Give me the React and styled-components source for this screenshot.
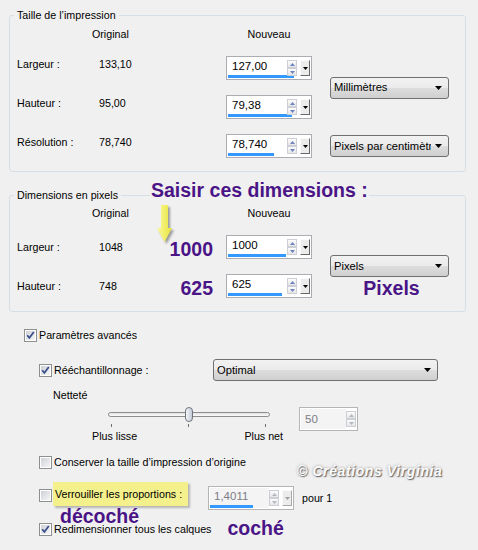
import styled, { createGlobalStyle } from "styled-components";

const GlobalStyle = createGlobalStyle`
  html, body {
    margin: 0;
    padding: 0;
    background: #f0f0f0;
  }
  body {
    font-family: "Liberation Sans", Arial, sans-serif;
    font-size: 10.7px;
    color: #000;
  }
`;

const ink = "#4a1487";

export default function App() {
    return (
        <Page>
            <GlobalStyle />

            <Group $top={0} $pt={6}>
                <Legend>Taille de l’impression</Legend>
                <Grid $rows="24px 24px 24px">
                    <ColHead $col={2} $shift={-6}>Original</ColHead>
                    <ColHead $col={4} $center>Nouveau</ColHead>

                    <RowLabel $row={2} $top>Largeur :</RowLabel>
                    <OrigValue $row={2} $top>133,10</OrigValue>
                    <SpinCell $row={2}><Spinner value="127,00" bar={66} /></SpinCell>

                    <RowLabel $row={3} $top>Hauteur :</RowLabel>
                    <OrigValue $row={3} $top>95,00</OrigValue>
                    <SpinCell $row={3}><Spinner value="79,38" bar={64} /></SpinCell>

                    <RowLabel $row={4} $top>Résolution :</RowLabel>
                    <OrigValue $row={4} $top>78,740</OrigValue>
                    <SpinCell $row={4}><Spinner value="78,740" bar={46} /></SpinCell>

                    <UnitCell $rows="2 / 4"><Dropdown width={119}>Millimètres</Dropdown></UnitCell>
                    <UnitCell $rows="4 / 5"><Dropdown width={119}>Pixels par centimètre</Dropdown></UnitCell>
                </Grid>
            </Group>

            <Group $top={16} $pt={5}>
                <Legend>Dimensions en pixels</Legend>
                <Grid $rows="24px 24px">
                    <ColHead $col={2} $shift={-6}>Original</ColHead>
                    <ColHead $col={4} $center>Nouveau</ColHead>

                    <RowLabel $row={2}>Largeur :</RowLabel>
                    <OrigValue $row={2}>1048</OrigValue>
                    <BigNumber $row={2}>1000</BigNumber>
                    <SpinCell $row={2}><Spinner value="1000" bar={58} /></SpinCell>

                    <RowLabel $row={3}>Hauteur :</RowLabel>
                    <OrigValue $row={3}>748</OrigValue>
                    <BigNumber $row={3}>625</BigNumber>
                    <SpinCell $row={3}><Spinner value="625" bar={54} /></SpinCell>

                    <UnitStack>
                        <Dropdown width={119}>Pixels</Dropdown>
                        <UnitNote>Pixels</UnitNote>
                    </UnitStack>
                </Grid>
            </Group>

            <Advanced>
                <CheckRow $indent={24} $top={17}>
                    <Checkbox checked />
                    <span>Paramètres avancés</span>
                </CheckRow>

                <ResampleRow>
                    <CheckGroup>
                        <Checkbox checked />
                        <span>Rééchantillonnage :</span>
                    </CheckGroup>
                    <Dropdown width={225}>Optimal</Dropdown>
                </ResampleRow>

                <SubLabel>Netteté</SubLabel>

                <SliderRow>
                    <Slider>
                        <TrackRow>
                            <Track />
                            <Thumb style={{ left: 77 }} />
                        </TrackRow>
                        <Ticks>
                            <Tick />
                            <Tick />
                            <Tick />
                        </Ticks>
                        <Scale>
                            <span>Plus lisse</span>
                            <span>Plus net</span>
                        </Scale>
                    </Slider>
                    <Spinner value="50" width={59} disabled noDrop />
                </SliderRow>

                <CheckRow $indent={39} $top={13}>
                    <Checkbox />
                    <span>Conserver la taille d’impression d’origine</span>
                </CheckRow>

                <LockRow>
                    <LockBox><Checkbox /></LockBox>
                    <Tip>Verrouiller les proportions :</Tip>
                    <LockSpin><Spinner value="1,4011" bar={43} disabled /></LockSpin>
                    <Per>pour 1</Per>
                </LockRow>

                <Note $indent={60}>décoché</Note>

                <CheckRow $indent={39} $top={-2}>
                    <Checkbox checked />
                    <span>Redimensionner tous les calques</span>
                    <Note $indent={14}>coché</Note>
                </CheckRow>
            </Advanced>

            <Headline>Saisir ces dimensions :</Headline>
            <ArrowMark width="22" height="44" viewBox="0 0 22 44">
                <defs>
                    <filter id="blur" x="-50%" y="-50%" width="200%" height="200%">
                        <feGaussianBlur stdDeviation="1.2" />
                    </filter>
                    <linearGradient id="yel" x1="0" x2="1">
                        <stop offset="0" stopColor="#fbfa9c" />
                        <stop offset="1" stopColor="#e8e23a" />
                    </linearGradient>
                </defs>
                <path d="M8 4 H15 V27 H19 L11.5 41 L4 27 H8 Z" fill="#555" opacity="0.55" filter="url(#blur)" />
                <path d="M6 2 H13 V25 H17 L9.5 39 L2 25 H6 Z" fill="url(#yel)" />
            </ArrowMark>
            <Watermark>© Créations Virginia</Watermark>
        </Page>
    );
}

function Spinner({ value, bar, disabled, noDrop, width = 86 }) {
    return (
        <SpinBox $w={width} $disabled={disabled}>
            <Field $disabled={disabled} $center={!bar}>
                <FieldText $disabled={disabled}>{value}</FieldText>
                {bar ? <Bar style={{ width: bar }} /> : null}
            </Field>
            <Steppers>
                <Step>
                    <svg width="5" height="3" viewBox="0 0 5 3"><polygon points="0,3 5,3 2.5,0" fill={disabled ? "#b4b8c0" : "#6d84bf"} /></svg>
                </Step>
                <Step>
                    <svg width="5" height="3" viewBox="0 0 5 3"><polygon points="0,0 5,0 2.5,3" fill={disabled ? "#b4b8c0" : "#6d84bf"} /></svg>
                </Step>
            </Steppers>
            {!noDrop && (
                <DropBtn $disabled={disabled}>
                    <svg width="5" height="3" viewBox="0 0 5 3"><polygon points="0,0 5,0 2.5,3" fill={disabled ? "#a0a0a0" : "#000"} /></svg>
                </DropBtn>
            )}
        </SpinBox>
    );
}

function Dropdown({ children, width }) {
    return (
        <SelectBox $w={width}>
            <SelectText>{children}</SelectText>
            <svg width="7" height="4" viewBox="0 0 7 4"><polygon points="0,0 7,0 3.5,4" fill="#000" /></svg>
        </SelectBox>
    );
}

function Checkbox({ checked }) {
    return (
        <CheckOuter>
            <CheckInner>
                {checked && (
                    <svg width="9" height="9" viewBox="0 0 9 9">
                        <path d="M1.2 4.2 L3.4 6.8 L7.8 1" stroke="#3a4f8c" strokeWidth="1.7" fill="none" />
                    </svg>
                )}
            </CheckInner>
        </CheckOuter>
    );
}

const Page = styled.div`
    position: relative;
    width: 478px;
    height: 550px;
    padding-top: 8px;
    box-sizing: border-box;
    overflow: hidden;
`;

const Group = styled.fieldset`
    margin: ${({ $top }) => $top}px 12px 0 9px;
    padding: ${({ $pt }) => $pt}px 4px 13px;
    border: 1px solid #d5dfe5;
    border-radius: 3px;
    min-width: 0;
`;

const Legend = styled.legend`
    padding: 0 3px;
    line-height: 14px;
`;

const Grid = styled.div`
    display: grid;
    grid-template-columns: 81px 63px 65px 86px 18px 119px;
    grid-template-rows: 13px ${({ $rows }) => $rows};
    row-gap: 15px;
    padding-left: 3px;
    line-height: 13px;
`;

const ColHead = styled.div`
    grid-row: 1;
    grid-column: ${({ $col }) => $col};
    justify-self: ${({ $center }) => ($center ? "center" : "start")};
    margin-left: ${({ $shift }) => $shift || 0}px;
`;

const RowLabel = styled.div`
    grid-column: 1;
    grid-row: ${({ $row }) => $row};
    align-self: ${({ $top }) => ($top ? "start" : "center")};
    padding-top: ${({ $top }) => ($top ? 2 : 0)}px;
`;

const OrigValue = styled(RowLabel)`
    grid-column: 2;
    padding-left: 1px;
`;

const BigNumber = styled.div`
    grid-column: 3;
    grid-row: ${({ $row }) => $row};
    justify-self: end;
    align-self: end;
    padding-right: 13px;
    font-size: 19.5px;
    font-weight: bold;
    line-height: 20px;
    color: ${ink};
`;

const SpinCell = styled.div`
    grid-column: 4;
    grid-row: ${({ $row }) => $row};
`;

const UnitCell = styled.div`
    grid-column: 6;
    grid-row: ${({ $rows }) => $rows};
    align-self: center;
`;

const UnitStack = styled.div`
    grid-column: 6;
    grid-row: 2 / 4;
    display: flex;
    flex-direction: column;
    justify-content: flex-end;
    align-items: center;
    gap: 1px;
`;

const UnitNote = styled.div`
    font-size: 19.5px;
    font-weight: bold;
    line-height: 20px;
    color: ${ink};
    margin-left: 4px;
`;

const SpinBox = styled.div`
    display: flex;
    align-items: center;
    width: ${({ $w }) => $w}px;
    height: 24px;
    box-sizing: border-box;
    padding: 1px;
    border: 1px solid ${({ $disabled }) => ($disabled ? "#b5b5b5" : "#abadb3")};
    background: #fff;
`;

const Field = styled.div`
    flex: 1;
    min-width: 0;
    align-self: stretch;
    display: flex;
    flex-direction: column;
    justify-content: ${({ $center }) => ($center ? "center" : "flex-start")};
    background: ${({ $disabled }) => ($disabled ? "#f4f4f4" : "#fff")};
`;

const FieldText = styled.div`
    padding-left: 4px;
    line-height: 16px;
    font-size: 11.5px;
    white-space: nowrap;
    color: ${({ $disabled }) => ($disabled ? "#7c7c86" : "#000")};
`;

const Bar = styled.div`
    flex: none;
    height: 3px;
    margin-top: 1px;
    background: #3399ff;
`;

const Steppers = styled.div`
    flex: none;
    display: flex;
    flex-direction: column;
    width: 10px;
    position: relative;
`;

const Step = styled.div`
    width: 10px;
    height: 8px;
    box-sizing: border-box;
    border: 1px solid #ccd0d6;
    background: linear-gradient(#fcfcfc, #e6e6e6);
    display: flex;
    align-items: center;
    justify-content: center;
`;

const DropBtn = styled.div`
    flex: none;
    width: 10px;
    height: 16px;
    margin-left: 3px;
    box-sizing: border-box;
    border: 1px solid;
    border-color: #fafafa ${({ $disabled }) => ($disabled ? "#a8a8a8 #a8a8a8" : "#696969 #696969")} #fafafa;
    background: #ececec;
    display: flex;
    align-items: center;
    justify-content: center;
`;

const SelectBox = styled.div`
    display: flex;
    align-items: center;
    width: ${({ $w }) => $w}px;
    height: 22px;
    box-sizing: border-box;
    padding: 0 6px 0 3px;
    border: 1px solid #707070;
    border-radius: 3px;
    background: linear-gradient(#f2f2f2 0%, #ebebeb 48%, #dddddd 52%, #cfcfcf 100%);
    font-size: 11.2px;
`;

const SelectText = styled.span`
    flex: 1;
    min-width: 0;
    margin-right: 4px;
    overflow: hidden;
    white-space: nowrap;
`;

const CheckOuter = styled.span`
    flex: none;
    display: flex;
    width: 13px;
    height: 13px;
    box-sizing: border-box;
    padding: 1px;
    border: 1px solid #8e8f8f;
    background: #fff;
`;

const CheckInner = styled.span`
    flex: 1;
    display: flex;
    background: linear-gradient(135deg, #cdd0d6, #f6f6f6);
    svg {
        overflow: visible;
    }
`;

const Advanced = styled.div`
    display: flex;
    flex-direction: column;
    line-height: 13px;
`;

const CheckRow = styled.div`
    display: flex;
    align-items: center;
    gap: 2px;
    padding-left: ${({ $indent }) => $indent}px;
    margin-top: ${({ $top }) => $top}px;
`;

const ResampleRow = styled.div`
    display: flex;
    align-items: center;
    padding-left: 39px;
    margin-top: 17px;
`;

const CheckGroup = styled.div`
    display: flex;
    align-items: center;
    gap: 2px;
    flex: 0 0 174px;
`;

const SubLabel = styled.div`
    padding-left: 53px;
    margin-top: 8px;
`;

const SliderRow = styled.div`
    display: flex;
    align-items: flex-start;
    gap: 14px;
    padding-left: 92px;
    margin-top: 5px;
`;

const Slider = styled.div`
    width: 193px;
    display: flex;
    flex-direction: column;
`;

const TrackRow = styled.div`
    position: relative;
    height: 15px;
    margin: 0 15px 0 16px;
    display: flex;
    align-items: center;
`;

const Track = styled.div`
    flex: 1;
    height: 5px;
    box-sizing: border-box;
    border: 1px solid #8d8d8d;
    border-radius: 3px;
    background: linear-gradient(#e2e2e2, #fbfbfb);
`;

const Thumb = styled.div`
    position: absolute;
    top: 0;
    width: 8px;
    height: 15px;
    box-sizing: border-box;
    border: 1px solid #6f747c;
    border-radius: 4px;
    background: linear-gradient(90deg, #f3f5fa, #c5cbd8);
`;

const Ticks = styled.div`
    display: flex;
    justify-content: space-between;
    margin: 2px 19px 0 19px;
`;

const Tick = styled.div`
    width: 1px;
    height: 3px;
    background: #707070;
`;

const Scale = styled.div`
    display: flex;
    justify-content: space-between;
    margin-top: 3px;
    padding-right: 2px;
`;

const LockRow = styled.div`
    display: flex;
    align-items: flex-start;
    padding-left: 39px;
    margin-top: 13px;
`;

const LockBox = styled.div`
    margin-top: 7px;
`;

const Tip = styled.div`
    width: 135px;
    height: 24px;
    margin-left: 1px;
    padding-left: 2px;
    box-sizing: border-box;
    line-height: 24px;
    background: #f4f08c;
    box-shadow: 2px 2px 2px rgba(0, 0, 0, 0.25);
`;

const LockSpin = styled.div`
    margin: 4px 0 0 20px;
`;

const Per = styled.div`
    margin: 10px 0 0 8px;
`;

const Note = styled.div`
    padding-left: ${({ $indent }) => $indent}px;
    margin-top: -2px;
    font-size: 19.5px;
    font-weight: bold;
    line-height: 16px;
    color: ${ink};
`;

const Headline = styled.div`
    position: absolute;
    left: 150px;
    top: 180px;
    padding: 0 1px;
    background: #f0f0f0;
    font-size: 19.5px;
    font-weight: bold;
    line-height: 20px;
    color: ${ink};
`;

const ArrowMark = styled.svg`
    position: absolute;
    left: 155px;
    top: 203px;
`;

const Watermark = styled.div`
    position: absolute;
    left: 297px;
    top: 463px;
    font-size: 14px;
    font-weight: bold;
    font-style: italic;
    letter-spacing: 0.6px;
    line-height: 16px;
    color: #fbfbfb;
    text-shadow: 1px 1px 1px #6a6a6a, 0 0 3px #9a9a9a;
`;
